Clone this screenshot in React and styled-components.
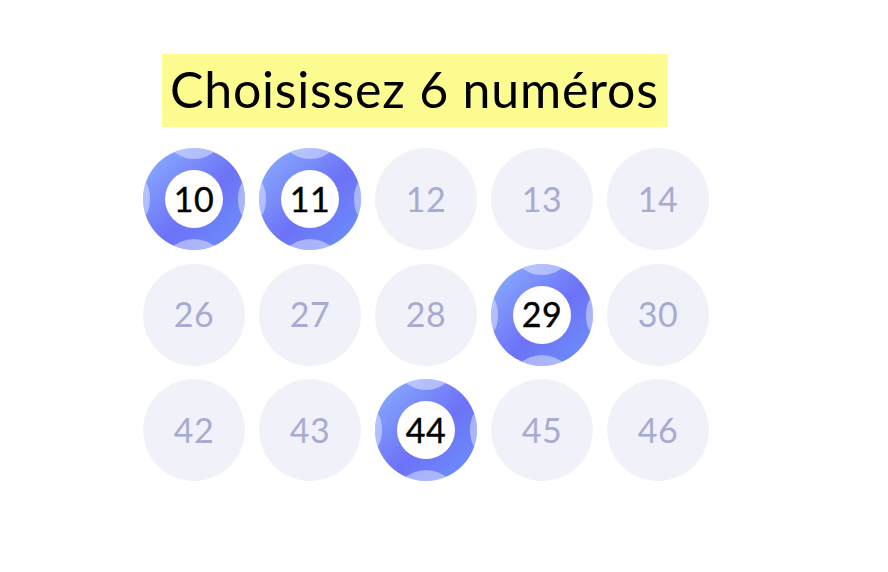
import styled, { createGlobalStyle } from "styled-components";

const GlobalStyle = createGlobalStyle`
    body {
        margin: 0;
        background: #fff;
        font-family: Lato, "Noto Sans", sans-serif;
    }
`

const Page = styled.div`
    padding: 54px 0 0 143px;
`

const Title = styled.h1`
    display: inline-block;
    margin: 0 0 21px 19px;
    padding: 0 9px 0 8px;
    height: 73px;
    line-height: 71px;
    background: #fdfc91;
    color: #000;
    font-size: 50px;
    font-weight: 400;
    letter-spacing: 0.8px;
`

const Grid = styled.div`
    display: grid;
    grid-template-columns: repeat(5, 102px);
    grid-auto-rows: 102px;
    column-gap: 14px;
    row-gap: 13.5px;
`

const Ball = styled.div`
    position: relative;
    width: 102px;
    height: 102px;
    border-radius: 50%;
    background: ${props => props.picked ? "transparent" : "#f1f2f9"};
    display: flex;
    align-items: center;
    justify-content: center;
`

const Number = styled.span`
    position: relative;
    top: -1px;
    font-size: 34px;
    font-weight: 400;
    letter-spacing: 0.5px;
    color: ${props => props.picked ? "#000" : "#a7abd1"};
    -webkit-text-stroke: ${props => props.picked ? "0.4px #000" : "0"};
`

const Inner = styled.div`
    position: absolute;
    left: 22px;
    top: 22px;
    width: 58px;
    height: 58px;
    border-radius: 50%;
    background: #fff;
`

const Shell = styled.svg`
    position: absolute;
    inset: 0;
`

const rows = [
    [10, 11, 12, 13, 14],
    [26, 27, 28, 29, 30],
    [42, 43, 44, 45, 46],
]
const picked = [10, 11, 29, 44]

function BallShell({ id }) {
    return (
        <Shell width="102" height="102" viewBox="0 0 102 102">
            <defs>
                <linearGradient id={"g" + id} x1="0" y1="0" x2="1" y2="1">
                    <stop offset="0" stopColor="#8cb2ff" />
                    <stop offset="0.55" stopColor="#6d72f7" />
                    <stop offset="1" stopColor="#6c93fb" />
                </linearGradient>
                <clipPath id={"c" + id}>
                    <circle cx="51" cy="51" r="51" />
                </clipPath>
            </defs>
            <circle cx="51" cy="51" r="51" fill={`url(#g${id})`} />
            <g clipPath={`url(#c${id})`} fill="#fff" fillOpacity="0.42">
                <circle cx="51" cy="-22" r="33" />
                <circle cx="51" cy="124" r="33" />
                <ellipse cx="-5" cy="51" rx="12" ry="22" />
                <ellipse cx="107" cy="51" rx="12" ry="22" />
            </g>
        </Shell>
    )
}

export default function App() {
    return (
        <Page>
            <GlobalStyle />
            <Title>Choisissez 6 numéros</Title>
            <Grid>
                {rows.flat().map(n => {
                    const on = picked.includes(n)
                    return (
                        <Ball key={n} picked={on}>
                            {on && <BallShell id={n} />}
                            {on && <Inner />}
                            <Number picked={on}>{n}</Number>
                        </Ball>
                    )
                })}
            </Grid>
        </Page>
    )
}
